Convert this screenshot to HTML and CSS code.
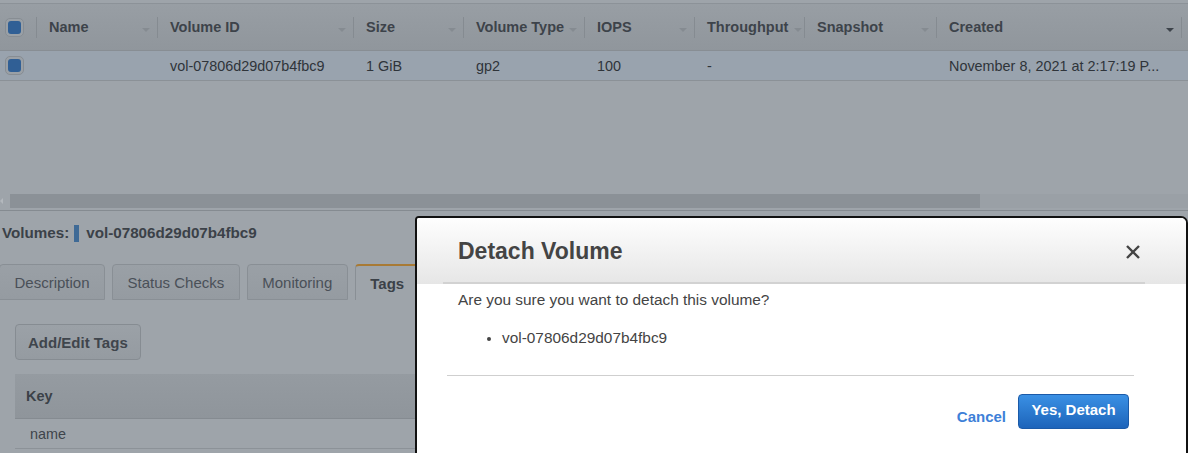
FILE: index.html
```html
<!DOCTYPE html>
<html>
<head>
<meta charset="utf-8">
<link rel="stylesheet" href="styles.css">
</head>
<body>
<div class="page">
  <section class="list">
    <div class="grid">
      <div class="hcell chk"><span class="checkbox"></span></div>
      <div class="hcell">Name<i class="arrow"></i></div>
      <div class="hcell">Volume ID<i class="arrow"></i></div>
      <div class="hcell">Size<i class="arrow"></i></div>
      <div class="hcell">Volume Type<i class="arrow"></i></div>
      <div class="hcell">IOPS<i class="arrow"></i></div>
      <div class="hcell narrow">Throughput<i class="arrow"></i></div>
      <div class="hcell">Snapshot<i class="arrow"></i></div>
      <div class="hcell">Created<i class="arrow dark"></i></div>
      <div class="hcell last"></div>

      <div class="cell chk"><span class="checkbox"></span></div>
      <div class="cell"></div>
      <div class="cell">vol-07806d29d07b4fbc9</div>
      <div class="cell">1 GiB</div>
      <div class="cell">gp2</div>
      <div class="cell">100</div>
      <div class="cell">-</div>
      <div class="cell"></div>
      <div class="cell">November 8, 2021 at 2:17:19 P...</div>
      <div class="cell"></div>
    </div>
  </section>
  <div class="hscroll">
    <span class="sarrow"></span>
    <div class="track"><div class="thumb"></div></div>
  </div>

  <section class="details">
    <h2 class="vol-title"><span>Volumes:</span><span class="bar"></span><span>vol-07806d29d07b4fbc9</span></h2>
    <nav class="tabs">
      <span class="tab">Description</span>
      <span class="tab">Status Checks</span>
      <span class="tab">Monitoring</span>
      <span class="tab active">Tags</span>
    </nav>
    <div class="tab-body">
      <button class="btn-gray">Add/Edit Tags</button>
      <div class="tag-table">
        <div class="tag-head">Key</div>
        <div class="tag-row">name</div>
      </div>
    </div>
  </section>

  <div class="modal">
    <header class="modal-head">
      <h1>Detach Volume</h1>
      <svg class="close" width="16" height="16" viewBox="0 0 16 16"><path d="M2 2 L14 14 M14 2 L2 14" stroke="#444" stroke-width="2.4" stroke-linecap="butt"/></svg>
    </header>
    <div class="modal-body">
      <p>Are you sure you want to detach this volume?</p>
      <ul>
        <li>vol-07806d29d07b4fbc9</li>
      </ul>
    </div>
    <footer class="modal-foot">
      <a class="cancel">Cancel</a>
      <button class="btn-primary">Yes, Detach</button>
    </footer>
  </div>
</div>
</body>
</html>
```

FILE: styles.css
```css
html, body {
  margin: 0;
  padding: 0;
}
body {
  width: 1188px;
  height: 453px;
  overflow: hidden;
  background: #9ea4aa;
  font-family: "Liberation Sans", Arial, sans-serif;
  color: #30353b;
}
.page {
  position: relative;
  height: 453px;
}
.list {
  height: 189px;
  margin-top: 3px;
  border-top: 1px solid #8c9298;
}
.grid {
  display: grid;
  grid-template-columns: 37px 121px 196px 110px 121px 110px 110px 132px 245px 6px;
}
.hcell {
  position: relative;
  height: 46px;
  display: flex;
  align-items: center;
  padding-left: 12px;
  font-weight: bold;
  font-size: 14.5px;
  color: #3d434a;
  background: linear-gradient(#989ea4, #90969c);
  border-bottom: 1px solid #888e94;
  white-space: nowrap;
}
.hcell::after {
  content: "";
  position: absolute;
  right: 0;
  top: 13px;
  height: 21px;
  width: 1px;
  background: #858b91;
}
.hcell.last::after { display: none; }
.hcell.chk, .cell.chk { padding-left: 5px; }
.arrow {
  position: absolute;
  right: 8px;
  top: 24px;
  width: 0;
  height: 0;
  border-left: 4px solid transparent;
  border-right: 4px solid transparent;
  border-top: 4px solid #858b91;
}
.narrow .arrow { right: 3px; }
.arrow.dark { border-top-color: #3d434a; }
.cell {
  height: 29px;
  display: flex;
  align-items: center;
  padding-left: 12px;
  font-size: 14.4px;
  color: #2f343a;
  background: #99a3ae;
  border-bottom: 1px solid #8b9197;
  white-space: nowrap;
  overflow: hidden;
}
.checkbox {
  box-sizing: border-box;
  width: 19px;
  height: 19px;
  border: 1px solid #878d93;
  border-radius: 5px;
  background: #9aa0a6;
  display: flex;
  align-items: center;
  justify-content: center;
}
.checkbox::before {
  content: "";
  width: 13px;
  height: 13px;
  border-radius: 3px;
  background: #305f95;
}
.hscroll {
  display: flex;
  align-items: center;
  height: 14px;
  margin-top: 1px;
}
.sarrow {
  width: 0;
  height: 0;
  border-top: 3px solid transparent;
  border-bottom: 3px solid transparent;
  border-right: 3px solid #b3b8bd;
  margin-right: 7px;
}
.track {
  flex: 1;
  height: 14px;
  background: #9aa0a6;
}
.thumb {
  width: 970px;
  height: 14px;
  background: #8b9197;
}
.details {
  margin-top: 2px;
  border-top: 1px solid #858b91;
}
.vol-title {
  margin: 0;
  padding-top: 13px;
  padding-left: 2px;
  height: 18px;
  line-height: 18px;
  font-size: 15.2px;
  font-weight: bold;
  color: #3b4148;
  display: flex;
  align-items: center;
  white-space: nowrap;
}
.bar {
  display: inline-block;
  width: 5px;
  height: 17px;
  margin: 0 7px 0 5px;
  background: #3f6a96;
}
.tabs {
  display: flex;
  gap: 7px;
  margin-top: 22px;
  height: 36px;
}
.tab {
  box-sizing: border-box;
  height: 36px;
  padding: 0 14.5px;
  display: flex;
  align-items: center;
  font-size: 15px;
  color: #4a5058;
  background: linear-gradient(#9aa0a6, #959ba1);
  border: 1px solid #898f95;
  border-radius: 4px 4px 0 0;
}
.tab:first-child { margin-left: -1px; }
.tab.active {
  background: #9ea4aa;
  border-top: 2px solid #a87a35;
  border-bottom: none;
  font-weight: bold;
  color: #3b4148;
  padding-right: 40px;
}
.tab-body {
  padding: 24px 0 0 15px;
}
.btn-gray {
  box-sizing: border-box;
  height: 36px;
  padding: 0 12px;
  font-family: inherit;
  font-size: 15px;
  font-weight: bold;
  color: #3f454c;
  background: linear-gradient(#9ba1a7, #959ba1);
  border: 1px solid #868c92;
  border-radius: 4px;
}
.tag-table {
  margin-top: 14px;
}
.tag-head {
  height: 44px;
  line-height: 44px;
  padding-left: 11px;
  font-size: 14.5px;
  font-weight: bold;
  color: #3b4148;
  background: linear-gradient(#959ba1, #8f959b);
  border-bottom: 1px solid #858b91;
}
.tag-row {
  height: 29px;
  line-height: 31px;
  padding-left: 15px;
  font-size: 14.4px;
  color: #3e444b;
  border-bottom: 1px solid #8c9298;
}
/* modal */
.modal {
  position: absolute;
  left: 415px;
  top: 213px;
  width: 773px;
  height: 240px;
  box-sizing: border-box;
  background: #fff;
  border: 2px solid #111;
  border-radius: 4px 7px 0 0;
  overflow: hidden;
}
.modal-head {
  position: relative;
  height: 66px;
  display: flex;
  align-items: center;
  justify-content: space-between;
  padding: 0 45px 0 41px;
  background: linear-gradient(#fefefe, #e6e6e6);
}
.modal-head::after {
  content: "";
  position: absolute;
  left: 26px;
  right: 41px;
  bottom: 0;
  height: 2px;
  background: #d2d2d2;
}
.modal-head h1 {
  margin: 0;
  font-size: 23px;
  font-weight: bold;
  color: #444;
}
.close { margin-top: 1px; }
.modal-body {
  padding: 7px 0 0 11px;
  font-size: 15.4px;
  color: #444;
  margin: 0 52px 0 30px;
  border-bottom: 1px solid #cfcfcf;
}
.modal-body p {
  margin: 0;
  line-height: 18px;
}
.modal-body ul {
  margin: 20px 0 0 0;
  padding: 0 0 0 44px;
  line-height: 18px;
  height: 46px;
}
.modal-body li::marker { font-size: 13px; }
.modal-foot {
  display: flex;
  justify-content: flex-end;
  align-items: flex-start;
  gap: 12px;
  padding: 18px 57px 0 0;
}
.cancel {
  margin-top: 14px;
  font-size: 15px;
  font-weight: bold;
  color: #3d80d8;
}
.btn-primary {
  box-sizing: border-box;
  width: 111px;
  height: 35px;
  padding: 0 0 4px;
  font-family: inherit;
  font-size: 15px;
  font-weight: bold;
  color: #fff;
  background: linear-gradient(#3a90e4, #1d64ba);
  border: 1px solid #1b5aa8;
  border-radius: 4px;
}
```
